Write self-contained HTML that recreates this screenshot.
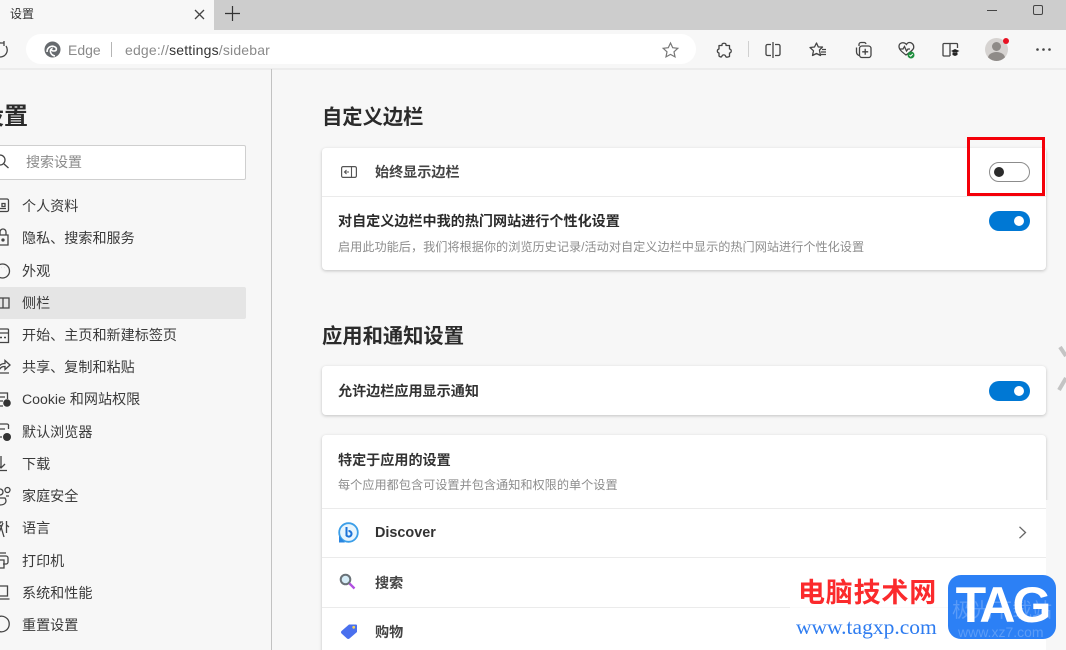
<!DOCTYPE html>
<html lang="zh"><head><meta charset="utf-8"><title>设置</title>
<style>
*{box-sizing:border-box}
html{margin:0;padding:0;width:1066px;height:650px;overflow:hidden;background:#f7f7f7}
body{margin:0;padding:0;background:#f7f7f7}
#p{width:1066px;height:650px;overflow:hidden;position:relative;background:#f7f7f7;font-family:"Liberation Sans","Noto Sans CJK SC",sans-serif;color:#2b2b2b;filter:blur(.3px)}
.a{position:absolute;white-space:nowrap}
.nav{position:absolute;left:22px;font-size:14.1px;line-height:20px;color:#3a3a3a;white-space:nowrap}
.card{position:absolute;left:322px;width:724px;background:#fff;border-radius:4px;box-shadow:0 1px 3px rgba(0,0,0,.22)}
.line{position:absolute;left:322px;width:724px;height:1px;background:#ebebeb}
.h2{position:absolute;left:322px;font-size:20.3px;line-height:28px;font-weight:700;color:#2b2b2b;white-space:nowrap}
.t{position:absolute;font-size:14.1px;line-height:20px;font-weight:700;color:#333;white-space:nowrap}
.s{position:absolute;left:338px;font-size:12.16px;line-height:18px;color:#8d8d8d;white-space:nowrap}
.tg{position:absolute;left:989px;width:41px;height:20px;border-radius:10px;background:#0078d4}
.tg:after{content:"";position:absolute;left:25px;top:5px;width:10px;height:10px;border-radius:50%;background:#fff}
svg{position:absolute;overflow:visible}
.ic{fill:none;stroke:#444;stroke-width:1.3}
</style></head><body><div id="p">

<!-- title/tab bar -->
<div class="a" style="left:0;top:0;width:1066px;height:30px;background:#cdcdcd"></div>
<div class="a" style="left:0;top:0;width:214px;height:30px;background:#f7f7f7"></div>
<div class="a" style="left:10px;top:5px;font-size:12px;line-height:18px;color:#333">设置</div>
<svg style="left:194px;top:9px" width="11" height="11" viewBox="0 0 11 11"><path d="M1 1L10 10M10 1L1 10" stroke="#444" stroke-width="1.3" fill="none"/></svg>
<svg style="left:225px;top:6px" width="15" height="15" viewBox="0 0 15 15"><path d="M7.5 0V15M0 7.5H15" stroke="#333" stroke-width="1.2" fill="none"/></svg>
<div class="a" style="left:987px;top:10px;width:10px;height:1px;background:#444"></div>
<div class="a" style="left:1033px;top:5px;width:10px;height:10px;border:1.3px solid #444;border-radius:2px"></div>

<!-- toolbar -->
<div class="a" style="left:0;top:68px;width:1066px;height:2px;background:#ececec"></div>
<svg style="left:-6px;top:41px" width="13" height="17" viewBox="0 0 13 17"><path d="M12 5A7 7 0 1 1 7 2H10M10 0V5" class="ic"/></svg>
<div class="a" style="left:26px;top:34px;width:670px;height:30px;border-radius:15px;background:#fff"></div>
<svg style="left:44px;top:41px" width="17" height="17" viewBox="0 0 17 17"><circle cx="8.5" cy="8.5" r="8" fill="#666a6e"/><path d="M3 11C3 6 8 4 11 6C13 7 13 10 10 10C8 10 7 9 7.5 8C5.5 9 6 14 11 15" fill="none" stroke="#fff" stroke-width="1.6"/></svg>
<div class="a" style="left:68px;top:40px;font-size:14px;line-height:20px;color:#8a8a8a">Edge</div>
<div class="a" style="left:111px;top:42px;width:1px;height:15px;background:#b5b5b5"></div>
<div class="a" style="left:125px;top:40px;font-size:14px;line-height:20px;color:#8a8a8a;letter-spacing:.18px">edge://<span style="color:#333">settings</span>/sidebar</div>
<svg style="left:662px;top:42px" width="17" height="16" viewBox="0 0 17 16"><path d="M8.5 1L10.7 5.7L15.8 6.3L12 9.8L13 14.9L8.5 12.4L4 14.9L5 9.8L1.2 6.3L6.3 5.7Z" fill="none" stroke="#777" stroke-width="1.2"/></svg>

<svg style="left:716px;top:42px" width="17" height="17" viewBox="0 0 17 17"><path d="M6 2.5C6 .8 10 .8 10 2.5V3.5H13.5V7C15.8 7 15.8 11 13.5 11V14.5C11 15.5 10 15.5 9.5 14C9 12.5 6.5 12.500 6 14C5.5 15.5 4 15 3 14V11C.8 10.5.8 7.5 3 7V3.5H6Z" class="ic" stroke-linejoin="round"/></svg>
<div class="a" style="left:748px;top:41px;width:1px;height:16px;background:#d0d0d0"></div>
<svg style="left:765px;top:42px" width="16" height="17" viewBox="0 0 16 17"><path d="M6 2.5H2.5A1.5 1.5 0 0 0 1 4V12A1.5 1.5 0 0 0 2.5 13.5H6M10 2.5H13.5A1.5 1.5 0 0 1 15 4V12A1.5 1.5 0 0 1 13.5 13.5H10M8 0V16" class="ic"/></svg>
<svg style="left:809px;top:42px" width="18" height="16" viewBox="0 0 18 16"><path d="M7.5 1L9.3 5H13.5L10.5 8V8.5L11.5 13.5L7.5 11.5L3.5 13.5L4.5 8.8L1 5.5L5.5 5ZM13 7.5H17M12 10H17M12 12.500H17" class="ic" stroke-linejoin="round"/></svg>
<svg style="left:854px;top:41px" width="18" height="18" viewBox="0 0 18 18"><path d="M5 5V3.5A2 2 0 0 1 7 1.5H10.5A2 2 0 0 1 12 3M2.5 6.5V11A4 4 0 0 0 5 14.5" class="ic"/><rect x="5.5" y="5" width="11.5" height="11.5" rx="2.5" class="ic"/><path d="M11.2 7.8V13.8M8.2 10.8H14.2" class="ic"/></svg>
<svg style="left:898px;top:41px" width="18" height="18" viewBox="0 0 18 18"><path d="M8.5 3.500C6 .5 1 1.5 1 5.5C1 8.5 4 11 8 14C11 12 14 10 15.5 7.5C16.5 4 14 1.5 11.5 1.5C10 1.5 9 2.5 8.500 3.500ZM1.5 8H5L6.5 5.5L8.5 10L10 8H12" class="ic"/><circle cx="13" cy="14" r="3.5" fill="#1e8e3e"/><path d="M11.5 14L12.7 15.2L14.7 13" stroke="#fff" fill="none"/></svg>
<svg style="left:942px;top:42px" width="18" height="16" viewBox="0 0 18 16"><path d="M8 1.5H2A1 1 0 0 0 1 2.5V13A1 1 0 0 0 2 14H8M8 1.5V14M8 1.5H14.5A1 1 0 0 1 15.5 2.5V6" class="ic"/><path d="M9 9L13 7L17.5 9L13 11ZM10.5 10.5V13L13 14L15.5 13V10.5" fill="#222"/></svg>
<div class="a" style="left:985px;top:38px;width:23px;height:23px;border-radius:50%;background:#d6d3d1;overflow:hidden">
<div class="a" style="left:7px;top:4px;width:9px;height:9px;border-radius:50%;background:#8f8b88"></div>
<div class="a" style="left:3px;top:14px;width:17px;height:12px;border-radius:50%;background:#8f8b88"></div></div>
<div class="a" style="left:1003px;top:38px;width:6px;height:6px;border-radius:50%;background:#e81123"></div>
<svg style="left:1036px;top:48px" width="15" height="3" viewBox="0 0 15 3"><circle cx="1.5" cy="1.5" r="1.3" fill="#444"/><circle cx="7.5" cy="1.5" r="1.3" fill="#444"/><circle cx="13.5" cy="1.5" r="1.3" fill="#444"/></svg>

<!-- sidebar -->
<div class="a" style="left:271px;top:69px;width:1px;height:581px;background:#c2c2c2"></div>
<div class="a" style="left:-20px;top:101px;font-size:24px;line-height:32px;font-weight:700;color:#2b2b2b">设置</div>
<div class="a" style="left:-10px;top:145px;width:256px;height:35px;background:#fff;border:1px solid #cfcfcf;border-radius:2px"></div>
<svg style="left:-1px;top:154px" width="12" height="15" viewBox="0 0 12 15"><circle cx="1" cy="6" r="5" class="ic" stroke="#666"/><path d="M5 10L9.500 14" class="ic" stroke="#666"/></svg>
<div class="a" style="left:26px;top:152px;font-size:14px;line-height:20px;color:#8a8a8a">搜索设置</div>
<div class="a" style="left:-10px;top:287px;width:256px;height:32px;background:#e5e5e5;border-radius:2px"></div>

<div class="nav" style="top:196px">个人资料</div>
<div class="nav" style="top:228px">隐私、搜索和服务</div>
<div class="nav" style="top:261px">外观</div>
<div class="nav" style="top:293px">侧栏</div>
<div class="nav" style="top:325px">开始、主页和新建标签页</div>
<div class="nav" style="top:357px">共享、复制和粘贴</div>
<div class="nav" style="top:389px">Cookie 和网站权限</div>
<div class="nav" style="top:422px">默认浏览器</div>
<div class="nav" style="top:454px">下载</div>
<div class="nav" style="top:486px">家庭安全</div>
<div class="nav" style="top:518px">语言</div>
<div class="nav" style="top:551px">打印机</div>
<div class="nav" style="top:583px">系统和性能</div>
<div class="nav" style="top:615px">重置设置</div>

<svg style="left:0;top:196px" width="12" height="440" viewBox="0 0 12 440">
<g fill="none" stroke="#444" stroke-width="1.3">
<path d="M-2 3H7A1.5 1.5 0 0 1 8.5 4.5V14A1.5 1.5 0 0 1 7 15.5H-2M2 7.5H5V10.5H2ZM0 12.500H6"/>
<path d="M-2 39H8V49H-2ZM0 39V36A3 3 0 0 1 6 36V39"/><circle cx="3" cy="44" r="1" fill="#444"/>
<circle cx="2.5" cy="75" r="7"/><path d="M1 71.500H1.100M4.500 71.500H4.600M6 75H6.100"/>
<path d="M-2 102H9V112H-2ZM3 102V112"/>
<path d="M-2 133H7.5A1 1 0 0 1 8.5 134V146.500H-2M-2 137H8.5"/><path d="M0 141.500H2M4 141.500H6" stroke-width="1.6"/>
<path d="M-2 173C-1 169 2 167.500 5 167.500V164.500L10 169L5 173.500V170.500C2 170.500 1 171 -1 174V177H9"/>
<path d="M-2 197H7.5V203M-2 201H5M-2 205H3M-2 210H3"/>
<path d="M-2 229A1 1 0 0 1 -1 228H7A1.5 1.5 0 0 1 8.5 230V233M-2 233H5M-2 241H2"/>
<path d="M1 260V272M-3 268L1 272L5 268M-2 274.500H7"/>
<circle cx="0" cy="296" r="3"/><circle cx="7.500" cy="294" r="2.500"/><path d="M-2 302H5C7 305 6 309 0 309M6 300H9"/>
<path d="M-2 326H3M.5 326L-1 329M.5 329L4 341M3 327L-2 339M6.500 325V337M6.500 329L9 331"/>
<path d="M-2 360H6A2 2 0 0 1 8 362V366A2 2 0 0 1 6 368H3M-2 368V372H4V364H-2M0 357H6"/>
<path d="M-2 390H7.500V400H-2M-3 403H9.500"/>
<path d="M-2 421A7.800 7.800 0 1 1 -2 435"/>
</g>
<circle cx="7" cy="207" r="3.800" fill="#333"/>
<circle cx="7" cy="241" r="4" fill="#333"/>
</svg>

<!-- main -->
<div class="h2" style="top:104px">自定义边栏</div>
<div class="card" style="top:148px;height:122px"></div>
<div class="line" style="top:196px"></div>
<svg style="left:341px;top:166px" width="16" height="12" viewBox="0 0 16 12"><rect x=".6" y=".6" width="14.8" height="10.8" rx="1.5" fill="none" stroke="#555" stroke-width="1.2"/><path d="M10.500 .6V11.4M8 6H3.500M5.500 4L3.500 6L5.500 8" fill="none" stroke="#555" stroke-width="1.1"/></svg>
<div class="t" style="left:375px;top:162px;color:#444">始终显示边栏</div>
<div class="a" style="left:989px;top:162px;width:41px;height:20px;border-radius:10px;background:#fff;border:1px solid #8c8c8c"></div>
<div class="a" style="left:994px;top:167px;width:10px;height:10px;border-radius:50%;background:#2b2b2b"></div>
<div class="t" style="left:338px;top:211px;color:#2b2b2b">对自定义边栏中我的热门网站进行个性化设置</div>
<div class="tg" style="top:211px"></div>
<div class="s" style="top:238px">启用此功能后，我们将根据你的浏览历史记录/活动对自定义边栏中显示的热门网站进行个性化设置</div>

<div class="h2" style="top:323px">应用和通知设置</div>
<div class="card" style="top:366px;height:49px"></div>
<div class="t" style="left:338px;top:381px">允许边栏应用显示通知</div>
<div class="tg" style="top:381px"></div>

<div class="card" style="top:435px;height:225px"></div>
<div class="t" style="left:338px;top:450px">特定于应用的设置</div>
<div class="s" style="top:476px">每个应用都包含可设置并包含通知和权限的单个设置</div>
<div class="line" style="top:508px"></div>
<div class="line" style="top:557px"></div>
<div class="line" style="top:607px;height:1px"></div>

<svg style="left:338px;top:522px" width="21" height="21" viewBox="0 0 21 21"><circle cx="10.5" cy="10.5" r="9.3" fill="#e8f5fd" stroke="#3b9ee8" stroke-width="1.8"/><path d="M1 14V20.5H7Z" fill="#2a86e0"/><path d="M8.500 5V13.500A2.800 2.800 0 1 0 10.500 9" fill="none" stroke="#1d73d8" stroke-width="2"/></svg>
<div class="t" style="left:375px;top:523px;font-size:14.4px">Discover</div>
<svg style="left:1018px;top:526px" width="9" height="13" viewBox="0 0 9 13"><path d="M1.5 .8L7.5 6.5L1.5 12.200" fill="none" stroke="#666" stroke-width="1.3"/></svg>

<svg style="left:339px;top:573px" width="18" height="18" viewBox="0 0 18 18"><circle cx="6.5" cy="6.5" r="4.8" fill="#d5ecf7" stroke="#6a7278" stroke-width="2"/><path d="M10.5 10.5L15.5 15.5" stroke="#b14fe0" stroke-width="2.3" fill="none"/></svg>
<div class="t" style="left:375px;top:573px;color:#444">搜索</div>

<svg style="left:340px;top:623px" width="18" height="17" viewBox="0 0 18 17"><path d="M9 1.5H16A1 1 0 0 1 17 2.5V9L9.500 15.500A2 2 0 0 1 7 15.500L1.500 10.500A2 2 0 0 1 1.500 8Z" fill="#4a70ee"/><circle cx="13.7" cy="4.3" r="1.4" fill="#f3d25a"/></svg>
<div class="t" style="left:375px;top:622px;color:#444">购物</div>

<!-- right edge scraps -->
<svg style="left:1056px;top:344px" width="10" height="50" viewBox="0 0 10 50"><path d="M4 3L10 12M3 46L10 34" fill="none" stroke="#c4c4c4" stroke-width="4"/></svg>
<div class="a" style="left:1046px;top:500px;width:20px;height:150px;background:#f7f7f7"></div>

<!-- watermark -->
<div class="a" style="left:790px;top:606px;width:256px;height:44px;background:#fff;opacity:.75"></div>
<div class="a" style="left:798px;top:578px;font-size:27px;line-height:30px;font-weight:700;color:#fb2a2c;letter-spacing:.8px">电脑技术网</div>
<div class="a" style="left:796px;top:614px;font-family:'Liberation Serif',serif;font-size:21.5px;line-height:26px;color:#2e7cf0">www.tagxp.com</div>
<div class="a" style="left:948px;top:575px;width:108px;height:64px;border-radius:13px;background:#2c80f5"></div>
<div class="a" style="left:952px;top:600px;font-size:20px;line-height:22px;color:#5a9bf8">极光下载站</div>
<div class="a" style="left:948px;top:575px;width:108px;height:60px;text-align:center;font-size:50px;line-height:60px;font-weight:700;color:#fff;letter-spacing:-3px">TAG</div>
<div class="a" style="left:958px;top:624px;font-size:14px;line-height:16px;color:#5c9cf6">www.xz7.com</div>

<!-- red highlight -->
<div class="a" style="left:967px;top:137px;width:78px;height:59px;border:3px solid #f40009"></div>
</div></body></html>
